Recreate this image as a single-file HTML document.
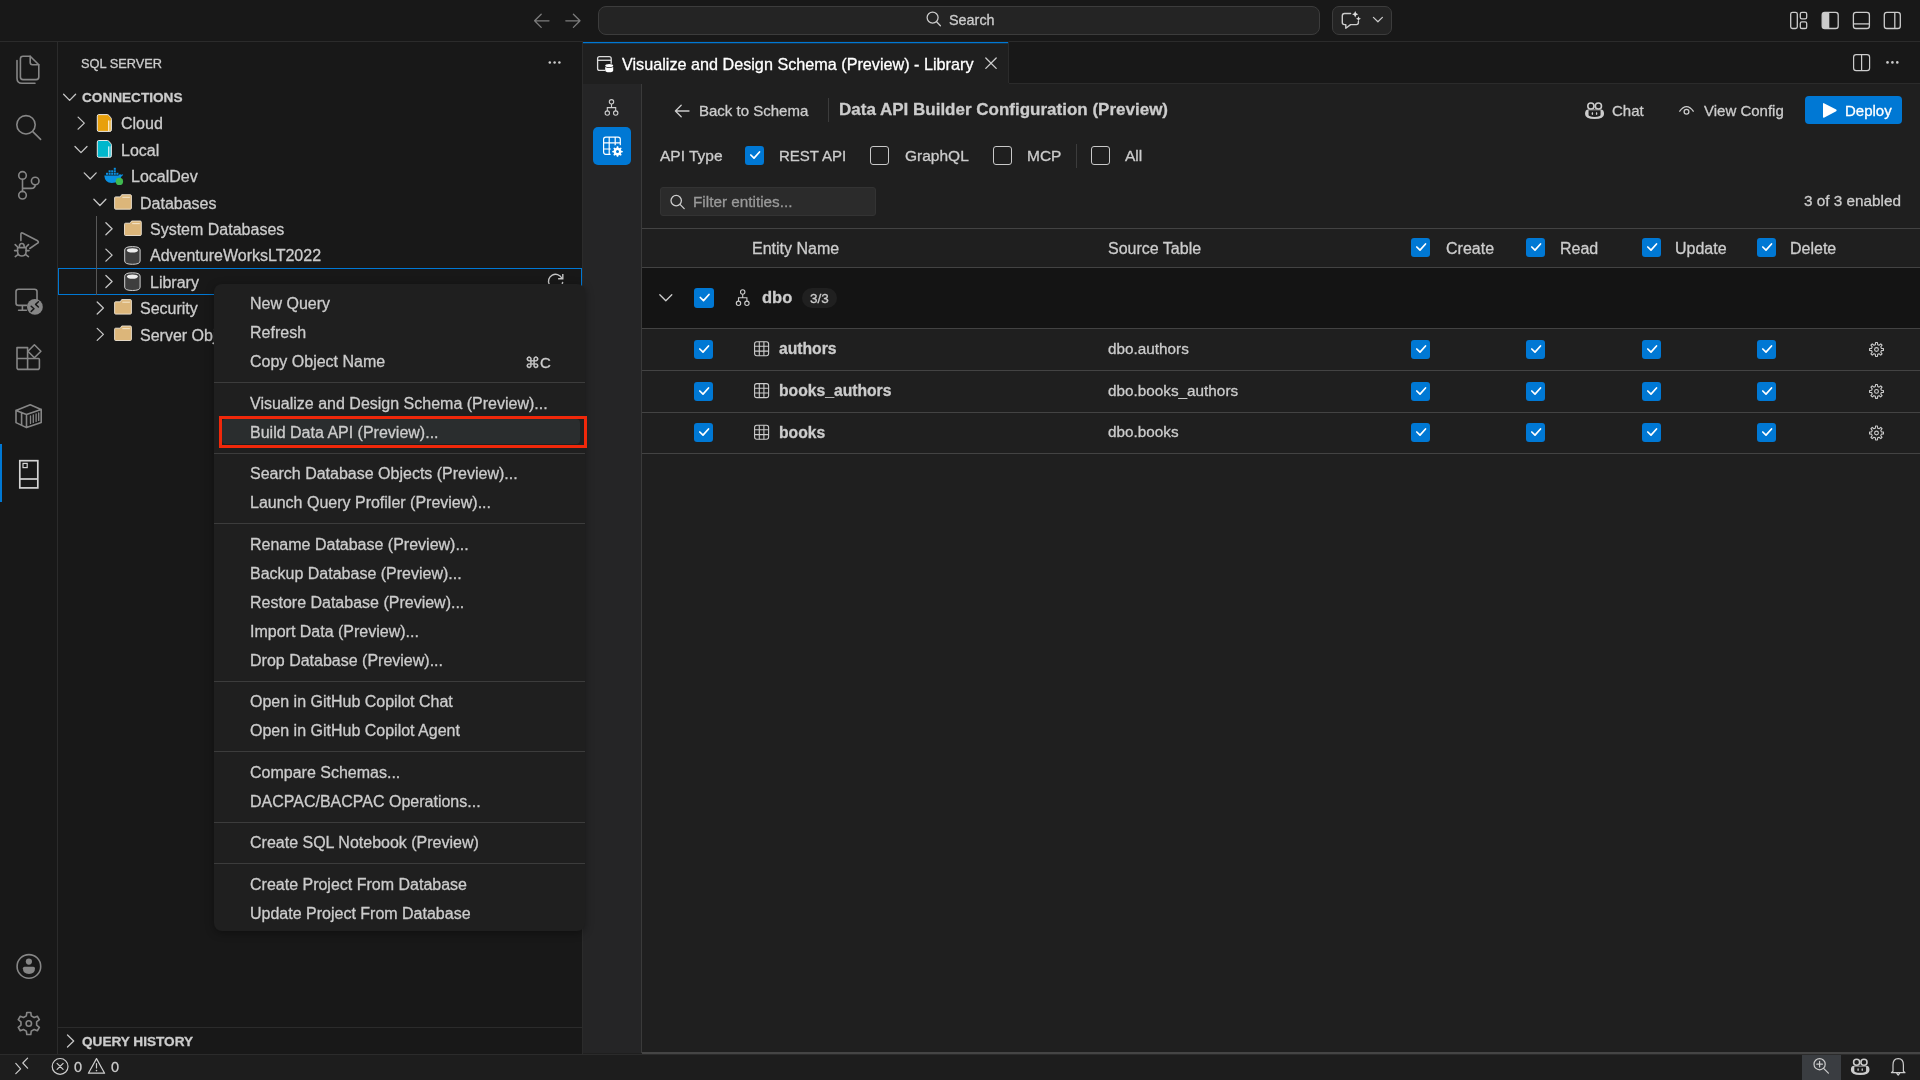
<!DOCTYPE html><html><head><meta charset="utf-8"><style>
*{box-sizing:border-box;margin:0;padding:0}
html,body{width:1920px;height:1080px;overflow:hidden;background:#181818;font-family:"Liberation Sans",sans-serif;color:#cccccc}
.a{position:absolute}
.t{position:absolute;white-space:nowrap;line-height:1;will-change:transform;-webkit-text-stroke:0.3px currentColor}
svg.ov{position:absolute;left:0;top:0;overflow:visible}
</style></head><body><div class="a" style="left:0px;top:0px;width:1920px;height:41px;background:#181818;"></div><div class="a" style="left:0px;top:41px;width:1920px;height:1px;background:#2b2b2b;"></div><div class="a" style="left:0px;top:42px;width:57px;height:1012px;background:#181818;"></div><div class="a" style="left:57px;top:42px;width:1px;height:1012px;background:#2b2b2b;"></div><div class="a" style="left:58px;top:42px;width:525px;height:1012px;background:#181818;"></div><div class="a" style="left:582px;top:42px;width:1px;height:1012px;background:#2b2b2b;"></div><div class="a" style="left:583px;top:42px;width:1337px;height:42px;background:#181818;"></div><div class="a" style="left:583px;top:83px;width:1337px;height:1px;background:#2b2b2b;"></div><div class="a" style="left:583px;top:41px;width:426px;height:43px;background:#1f1f1f;"></div><div class="a" style="left:583px;top:42px;width:426px;height:1px;background:#0078d4;"></div><div class="a" style="left:583px;top:43px;width:426px;height:1px;background:rgba(0,120,212,0.25);"></div><div class="a" style="left:1008px;top:42px;width:1px;height:41px;background:#2b2b2b;"></div><div class="a" style="left:583px;top:84px;width:1337px;height:970px;background:#1f1f1f;"></div><div class="a" style="left:583px;top:84px;width:58px;height:969px;background:#252526;"></div><div class="a" style="left:641px;top:84px;width:1px;height:969px;background:#3a3a3a;"></div><div class="a" style="left:0px;top:1054px;width:1920px;height:26px;background:#1d1d1d;"></div><div class="a" style="left:0px;top:1054px;width:1920px;height:1px;background:#2b2b2b;"></div><div class="a" style="left:642px;top:1052px;width:1278px;height:2px;background:#454545;"></div><div class="a" style="left:598px;top:6px;width:722px;height:29px;border:1px solid #3c3c3c;border-radius:8px;background:#242424"></div><div class="a" style="left:1332px;top:6px;width:60px;height:29px;border:1px solid #3c3c3c;border-radius:7px;background:#242424"></div><div class="t" style="left:948.50px;top:13.20px;font-size:14.4px;color:#cccccc;font-weight:400;">Search</div><div class="t" style="left:81.30px;top:58.16px;font-size:12.8px;color:#cccccc;font-weight:400;">SQL SERVER</div><div class="t" style="left:81.90px;top:90.93px;font-size:13.6px;color:#cccccc;font-weight:700;">CONNECTIONS</div><div class="t" style="left:121.00px;top:116.48px;font-size:16px;color:#cccccc;font-weight:400;">Cloud</div><div class="t" style="left:121.00px;top:142.88px;font-size:16px;color:#cccccc;font-weight:400;">Local</div><div class="t" style="left:130.60px;top:169.28px;font-size:16px;color:#cccccc;font-weight:400;">LocalDev</div><div class="t" style="left:140.20px;top:195.68px;font-size:16px;color:#cccccc;font-weight:400;">Databases</div><div class="t" style="left:149.80px;top:222.08px;font-size:16px;color:#cccccc;font-weight:400;">System Databases</div><div class="t" style="left:149.80px;top:248.48px;font-size:16px;color:#cccccc;font-weight:400;">AdventureWorksLT2022</div><div class="t" style="left:149.80px;top:274.88px;font-size:16px;color:#cccccc;font-weight:400;">Library</div><div class="t" style="left:140.20px;top:301.28px;font-size:16px;color:#cccccc;font-weight:400;">Security</div><div class="t" style="left:140.20px;top:327.68px;font-size:16px;color:#cccccc;font-weight:400;">Server Objects</div><div class="a" style="left:58px;top:268px;width:524px;height:27px;border:1px solid #0078d4"></div><div class="a" style="left:58px;top:1027px;width:524px;height:1px;background:#2b2b2b;"></div><div class="t" style="left:81.90px;top:1035.33px;font-size:13.6px;color:#cccccc;font-weight:700;">QUERY HISTORY</div><div class="t" style="left:74.30px;top:1059.95px;font-size:14.5px;color:#cccccc;font-weight:400;">0</div><div class="t" style="left:110.50px;top:1059.95px;font-size:14.5px;color:#cccccc;font-weight:400;">0</div><div class="a" style="left:1802px;top:1055px;width:39px;height:25px;background:#3a3d41;"></div><div class="t" style="left:622.40px;top:55.74px;font-size:16.2px;color:#ffffff;font-weight:400;">Visualize and Design Schema (Preview) - Library</div><div class="a" style="left:593px;top:127px;width:38px;height:38px;background:#0078d4;border-radius:5px"></div><div class="t" style="left:699.30px;top:102.75px;font-size:15px;color:#cccccc;font-weight:400;">Back to Schema</div><div class="a" style="left:828px;top:98px;width:1px;height:24px;background:#3c3c3c;"></div><div class="t" style="left:839.30px;top:101.01px;font-size:17px;color:#cccccc;font-weight:700;">Data API Builder Configuration (Preview)</div><div class="t" style="left:1612.00px;top:102.84px;font-size:15px;color:#cccccc;font-weight:400;">Chat</div><div class="t" style="left:1703.70px;top:102.84px;font-size:15px;color:#cccccc;font-weight:400;">View Config</div><div class="a" style="left:1805px;top:96px;width:97px;height:28px;background:#0078d4;border-radius:4px"></div><div class="t" style="left:1844.50px;top:102.84px;font-size:15px;color:#ffffff;font-weight:400;">Deploy</div><div class="t" style="left:660.20px;top:147.54px;font-size:15.5px;color:#cccccc;font-weight:400;">API Type</div><div class="t" style="left:779.30px;top:147.75px;font-size:15px;color:#cccccc;font-weight:400;">REST API</div><div class="t" style="left:904.70px;top:147.54px;font-size:15.5px;color:#cccccc;font-weight:400;">GraphQL</div><div class="t" style="left:1027.30px;top:147.54px;font-size:15.5px;color:#cccccc;font-weight:400;">MCP</div><div class="a" style="left:1076px;top:144px;width:1px;height:24px;background:#3c3c3c;"></div><div class="t" style="left:1124.80px;top:147.54px;font-size:15.5px;color:#cccccc;font-weight:400;">All</div><div class="a" style="left:660px;top:187px;width:216px;height:29px;background:#2b2b2b;border:1px solid #333;border-radius:3px"></div><div class="t" style="left:692.70px;top:194.32px;font-size:15.3px;color:#9a9a9a;font-weight:400;">Filter entities...</div><div class="t" style="right:18.60px;top:193.12px;font-size:15.3px;color:#cccccc;font-weight:400;">3 of 3 enabled</div><div class="a" style="left:642px;top:228px;width:1278px;height:1px;background:#434343;"></div><div class="a" style="left:642px;top:267px;width:1278px;height:1px;background:#434343;"></div><div class="a" style="left:642px;top:268px;width:1278px;height:60px;background:#141414;"></div><div class="a" style="left:642px;top:328px;width:1278px;height:1px;background:#434343;"></div><div class="a" style="left:642px;top:370px;width:1278px;height:1px;background:#434343;"></div><div class="a" style="left:642px;top:412px;width:1278px;height:1px;background:#434343;"></div><div class="a" style="left:642px;top:453px;width:1278px;height:1px;background:#434343;"></div><div class="t" style="left:752.40px;top:240.93px;font-size:16px;color:#cccccc;font-weight:400;">Entity Name</div><div class="t" style="left:1107.60px;top:240.93px;font-size:16px;color:#cccccc;font-weight:400;">Source Table</div><div class="t" style="left:1445.50px;top:240.53px;font-size:16px;color:#cccccc;font-weight:400;">Create</div><div class="t" style="left:1560.00px;top:240.53px;font-size:16px;color:#cccccc;font-weight:400;">Read</div><div class="t" style="left:1675.20px;top:240.53px;font-size:16px;color:#cccccc;font-weight:400;">Update</div><div class="t" style="left:1790.30px;top:240.53px;font-size:16px;color:#cccccc;font-weight:400;">Delete</div><div class="t" style="left:761.60px;top:289.12px;font-size:16.5px;color:#cccccc;font-weight:700;">dbo</div><div class="a" style="left:802px;top:288px;width:35px;height:20px;background:#202020;border-radius:10px"></div><div class="t" style="left:810.00px;top:291.77px;font-size:13.5px;color:#cccccc;font-weight:400;">3/3</div><div class="t" style="left:778.60px;top:341.05px;font-size:15.7px;color:#cccccc;font-weight:700;">authors</div><div class="t" style="left:1107.60px;top:340.92px;font-size:15.3px;color:#cccccc;font-weight:400;">dbo.authors</div><div class="t" style="left:778.60px;top:382.95px;font-size:15.7px;color:#cccccc;font-weight:700;">books_authors</div><div class="t" style="left:1107.60px;top:382.82px;font-size:15.3px;color:#cccccc;font-weight:400;">dbo.books_authors</div><div class="t" style="left:778.60px;top:424.55px;font-size:15.7px;color:#cccccc;font-weight:700;">books</div><div class="t" style="left:1107.60px;top:424.42px;font-size:15.3px;color:#cccccc;font-weight:400;">dbo.books</div><div class="a" style="left:745px;top:146px;width:19px;height:19px;background:#0078d4;border-radius:3px"></div><div class="a" style="left:870px;top:146px;width:19px;height:19px;border:1.5px solid #c8c8c8;border-radius:3px"></div><div class="a" style="left:993px;top:146px;width:19px;height:19px;border:1.5px solid #c8c8c8;border-radius:3px"></div><div class="a" style="left:1091px;top:146px;width:19px;height:19px;border:1.5px solid #c8c8c8;border-radius:3px"></div><div class="a" style="left:1411px;top:238px;width:19px;height:19px;background:#0078d4;border-radius:3px"></div><div class="a" style="left:1526px;top:238px;width:19px;height:19px;background:#0078d4;border-radius:3px"></div><div class="a" style="left:1642px;top:238px;width:19px;height:19px;background:#0078d4;border-radius:3px"></div><div class="a" style="left:1757px;top:238px;width:19px;height:19px;background:#0078d4;border-radius:3px"></div><div class="a" style="left:694px;top:288px;width:20px;height:20px;background:#0078d4;border-radius:3px"></div><div class="a" style="left:694px;top:340px;width:19px;height:19px;background:#0078d4;border-radius:3px"></div><div class="a" style="left:1411px;top:340px;width:19px;height:19px;background:#0078d4;border-radius:3px"></div><div class="a" style="left:1526px;top:340px;width:19px;height:19px;background:#0078d4;border-radius:3px"></div><div class="a" style="left:1642px;top:340px;width:19px;height:19px;background:#0078d4;border-radius:3px"></div><div class="a" style="left:1757px;top:340px;width:19px;height:19px;background:#0078d4;border-radius:3px"></div><div class="a" style="left:694px;top:382px;width:19px;height:19px;background:#0078d4;border-radius:3px"></div><div class="a" style="left:1411px;top:382px;width:19px;height:19px;background:#0078d4;border-radius:3px"></div><div class="a" style="left:1526px;top:382px;width:19px;height:19px;background:#0078d4;border-radius:3px"></div><div class="a" style="left:1642px;top:382px;width:19px;height:19px;background:#0078d4;border-radius:3px"></div><div class="a" style="left:1757px;top:382px;width:19px;height:19px;background:#0078d4;border-radius:3px"></div><div class="a" style="left:694px;top:423px;width:19px;height:19px;background:#0078d4;border-radius:3px"></div><div class="a" style="left:1411px;top:423px;width:19px;height:19px;background:#0078d4;border-radius:3px"></div><div class="a" style="left:1526px;top:423px;width:19px;height:19px;background:#0078d4;border-radius:3px"></div><div class="a" style="left:1642px;top:423px;width:19px;height:19px;background:#0078d4;border-radius:3px"></div><div class="a" style="left:1757px;top:423px;width:19px;height:19px;background:#0078d4;border-radius:3px"></div><div class="a" style="left:0px;top:444px;width:2px;height:58px;background:#0078d4;"></div><div class="a" style="left:96px;top:216px;width:1px;height:79px;background:#585858;"></div><svg class="ov" width="1920" height="1080" viewBox="0 0 1920 1080"><path d="M750.8 155 L754 158.1 L759.5 152" fill="none" stroke="#fff" stroke-width="1.7" stroke-linecap="round" stroke-linejoin="round"/><path d="M700.3 297.5 L703.5 300.6 L709.0 294.5" fill="none" stroke="#fff" stroke-width="1.7" stroke-linecap="round" stroke-linejoin="round"/><path d="M1416.8 247 L1420 250.1 L1425.5 244" fill="none" stroke="#fff" stroke-width="1.7" stroke-linecap="round" stroke-linejoin="round"/><path d="M1531.8 247 L1535 250.1 L1540.5 244" fill="none" stroke="#fff" stroke-width="1.7" stroke-linecap="round" stroke-linejoin="round"/><path d="M1647.8 247 L1651 250.1 L1656.5 244" fill="none" stroke="#fff" stroke-width="1.7" stroke-linecap="round" stroke-linejoin="round"/><path d="M1762.8 247 L1766 250.1 L1771.5 244" fill="none" stroke="#fff" stroke-width="1.7" stroke-linecap="round" stroke-linejoin="round"/><path d="M699.8 349 L703 352.1 L708.5 346" fill="none" stroke="#fff" stroke-width="1.7" stroke-linecap="round" stroke-linejoin="round"/><path d="M1416.8 349 L1420 352.1 L1425.5 346" fill="none" stroke="#fff" stroke-width="1.7" stroke-linecap="round" stroke-linejoin="round"/><path d="M1531.8 349 L1535 352.1 L1540.5 346" fill="none" stroke="#fff" stroke-width="1.7" stroke-linecap="round" stroke-linejoin="round"/><path d="M1647.8 349 L1651 352.1 L1656.5 346" fill="none" stroke="#fff" stroke-width="1.7" stroke-linecap="round" stroke-linejoin="round"/><path d="M1762.8 349 L1766 352.1 L1771.5 346" fill="none" stroke="#fff" stroke-width="1.7" stroke-linecap="round" stroke-linejoin="round"/><path d="M699.8 391 L703 394.1 L708.5 388" fill="none" stroke="#fff" stroke-width="1.7" stroke-linecap="round" stroke-linejoin="round"/><path d="M1416.8 391 L1420 394.1 L1425.5 388" fill="none" stroke="#fff" stroke-width="1.7" stroke-linecap="round" stroke-linejoin="round"/><path d="M1531.8 391 L1535 394.1 L1540.5 388" fill="none" stroke="#fff" stroke-width="1.7" stroke-linecap="round" stroke-linejoin="round"/><path d="M1647.8 391 L1651 394.1 L1656.5 388" fill="none" stroke="#fff" stroke-width="1.7" stroke-linecap="round" stroke-linejoin="round"/><path d="M1762.8 391 L1766 394.1 L1771.5 388" fill="none" stroke="#fff" stroke-width="1.7" stroke-linecap="round" stroke-linejoin="round"/><path d="M699.8 432 L703 435.1 L708.5 429" fill="none" stroke="#fff" stroke-width="1.7" stroke-linecap="round" stroke-linejoin="round"/><path d="M1416.8 432 L1420 435.1 L1425.5 429" fill="none" stroke="#fff" stroke-width="1.7" stroke-linecap="round" stroke-linejoin="round"/><path d="M1531.8 432 L1535 435.1 L1540.5 429" fill="none" stroke="#fff" stroke-width="1.7" stroke-linecap="round" stroke-linejoin="round"/><path d="M1647.8 432 L1651 435.1 L1656.5 429" fill="none" stroke="#fff" stroke-width="1.7" stroke-linecap="round" stroke-linejoin="round"/><path d="M1762.8 432 L1766 435.1 L1771.5 429" fill="none" stroke="#fff" stroke-width="1.7" stroke-linecap="round" stroke-linejoin="round"/><g fill="none" stroke="#7c7c7c" stroke-width="1.3" stroke-linecap="round" stroke-linejoin="round"><path d="M534.6 20.8 H549 M541.2 14.2 L534.6 20.8 L541.2 27.4"/><path d="M580 20.8 H565.8 M573.4 14.2 L580 20.8 L573.4 27.4"/></g><g fill="none" stroke="#cccccc" stroke-width="1.25" stroke-linecap="round"><circle cx="932.6" cy="17.6" r="5.5"/><path d="M936.6 21.8 L940.4 25.8"/></g><g fill="none" stroke="#cccccc" stroke-width="1.4" stroke-linejoin="round" stroke-linecap="round"><path d="M1350.6 13.5 H1344.5 Q1342.3 13.5 1342.3 15.7 V22.6 Q1342.3 24.6 1344.4 24.6 H1345.8 V28.3 L1350.6 24.6 H1356.4 Q1358.4 24.6 1358.4 22.6 V21.4"/><path d="M1373.4 17.4 L1377.9 21.8 L1382.4 17.4" stroke-width="1.2"/></g><path fill="#dddddd" d="M1355.2 11 L1356.2 13.3 L1358.3 14.3 L1356.2 15.3 L1355.2 17.6 L1354.2 15.3 L1352.1 14.3 L1354.2 13.3 Z M1358.5 16.2 L1359.3 17.9 L1361 18.7 L1359.3 19.5 L1358.5 21.2 L1357.7 19.5 L1356 18.7 L1357.7 17.9 Z"/><g fill="none" stroke="#cccccc" stroke-width="1.3"><rect x="1790.7" y="12.3" width="6.6" height="16.2" rx="1.8"/><rect x="1800.3" y="12.3" width="6.4" height="6.6" rx="1.6"/><rect x="1800.3" y="21.9" width="6.4" height="6.6" rx="1.6"/><rect x="1822.2" y="12.3" width="16" height="16.2" rx="2.6"/><rect x="1853.4" y="12.3" width="16" height="16.2" rx="2.6"/><path d="M1853.4 23.9 H1869.4"/><rect x="1884.3" y="12.3" width="16" height="16.2" rx="2.6"/><path d="M1894.8 12.3 V28.5"/></g><path fill="#cccccc" d="M1824.8 12.3 H1829.3 V28.5 H1824.8 Q1822.2 28.5 1822.2 25.9 V14.9 Q1822.2 12.3 1824.8 12.3 Z"/><g fill="none" stroke="#868686" stroke-width="1.6" stroke-linejoin="round" stroke-linecap="round"><path d="M23 56.2 H30.2 L38.8 64.8 V77 Q38.8 79.6 36.2 79.6 H23 Q20.4 79.6 20.4 77 V58.8 Q20.4 56.2 23 56.2 Z"/><path d="M30.2 56.2 V62.6 Q30.2 64.8 32.4 64.8 H38.8"/><path d="M17 60.6 V78.2 Q17 83.2 22 83.2 H35"/><circle cx="26" cy="124.8" r="9.2"/><path d="M32.8 131.6 L40.6 139.4"/><circle cx="22.5" cy="175.4" r="3.8"/><circle cx="22.5" cy="195.2" r="3.8"/><circle cx="35.2" cy="181" r="3.8"/><path d="M22.5 179.2 V191.4 M35.2 184.8 Q35.2 188.4 31.2 188.4 H22.5"/><path d="M20.9 240.6 V234.4 Q20.9 232.2 23 233.2 L37.6 240.8 Q39.2 242.2 37.6 243.2 L29.8 248.5"/><path d="M19.4 246.4 Q19.4 243.5 21.8 243.5 Q24.2 243.5 24.2 246.4"/><path d="M17.6 247.6 H26.1 V251.4 Q26.1 256 21.85 256 Q17.6 256 17.6 251.4 Z"/><path d="M17.4 246.8 L15.2 244.6 M26.3 246.8 L28.5 244.6 M17.6 250.6 H14.6 M26.1 250.6 H29 M18.2 254.4 L15.3 256.6 M25.5 254.4 L28.4 256.6"/><path d="M37 300 V291.6 Q37 289.2 34.6 289.2 H18.4 Q16 289.2 16 291.6 V303 Q16 305.4 18.4 305.4 H26.6 M22.4 305.4 V310.2 M18.6 310.2 H26.4"/><path d="M17 347.6 H27.6 V369.4 H19 Q17 369.4 17 367.4 Z M17 358.5 H38.4 Q39.4 358.5 39.4 359.6 V367.4 Q39.4 369.4 37.4 369.4 H27.6"/><path d="M34.4 344.8 L40.9 351.3 L34.4 357.8 L27.9 351.3 Z"/><path d="M16 410.4 L30.2 404.8 L41.2 409.4 L26.5 414.6 Z M16 410.4 V422.6 L26.5 427.6 L41.2 422.6 V409.4 M26.5 414.6 V427.6 M21.6 412.6 V425"/></g><g fill="none" stroke="#868686" stroke-width="1.3" stroke-linecap="round"><path d="M30.5 416 V423.4 M33.3 415 V422.4 M36.1 414 V421.4 M38.7 413 V420.4"/></g><circle cx="34.9" cy="306.9" r="7.9" fill="#868686"/><g fill="none" stroke="#181818" stroke-width="1.5" stroke-linecap="round" stroke-linejoin="round"><path d="M31.2 306.2 L34 308.8 L31.2 311.4 M38.4 301.8 L35.6 304.4 L38.4 307"/></g><g fill="none" stroke="#d4d4d4" stroke-width="1.7"><rect x="19.8" y="460.7" width="18" height="27.2"/><path d="M19.8 479 H37.8"/><rect x="23" y="463.4" width="4.2" height="4.2" stroke-width="1.2"/></g><g fill="none" stroke="#868686" stroke-width="1.6"><circle cx="28.9" cy="966.4" r="11.8"/></g><g fill="#868686"><circle cx="28.9" cy="961.6" r="3.1"/><path d="M22.9 968.3 Q22.9 966.7 24.5 966.7 H33.4 Q35 966.7 35 968.3 Q35 973.9 28.95 973.9 Q22.9 973.9 22.9 968.3 Z"/></g><path d="M26.33 1015.89 L26.82 1012.48 L30.78 1012.48 L31.27 1015.89 L34.15 1017.55 L37.35 1016.27 L39.34 1019.71 L36.63 1021.84 L36.63 1025.16 L39.34 1027.29 L37.35 1030.73 L34.15 1029.45 L31.27 1031.11 L30.78 1034.52 L26.82 1034.52 L26.33 1031.11 L23.45 1029.45 L20.25 1030.73 L18.26 1027.29 L20.97 1025.16 L20.97 1021.84 L18.26 1019.71 L20.25 1016.27 L23.45 1017.55 Z" fill="none" stroke="#868686" stroke-width="1.6" stroke-linejoin="round"/><circle cx="28.8" cy="1023.5" r="2.7" fill="none" stroke="#868686" stroke-width="1.6"/><g fill="#cccccc"><circle cx="549.8" cy="62.4" r="1.25"/><circle cx="554.6" cy="62.4" r="1.25"/><circle cx="559.4" cy="62.4" r="1.25"/></g><path d="M63.599999999999994 94.2 L69.6 100.39999999999999 L75.6 94.2" fill="none" stroke="#c5c5c5" stroke-width="1.3" stroke-linecap="round" stroke-linejoin="round"/><path d="M78.10000000000001 117.15 L84.3 123.15 L78.10000000000001 129.15" fill="none" stroke="#c5c5c5" stroke-width="1.3" stroke-linecap="round" stroke-linejoin="round"/><path d="M75 146.45000000000002 L81 152.65 L87 146.45000000000002" fill="none" stroke="#c5c5c5" stroke-width="1.3" stroke-linecap="round" stroke-linejoin="round"/><path d="M84.2 172.85 L90.2 179.04999999999998 L96.2 172.85" fill="none" stroke="#c5c5c5" stroke-width="1.3" stroke-linecap="round" stroke-linejoin="round"/><path d="M93.9 199.25 L99.9 205.45 L105.9 199.25" fill="none" stroke="#c5c5c5" stroke-width="1.3" stroke-linecap="round" stroke-linejoin="round"/><path d="M105.9 222.75 L112.1 228.75 L105.9 234.75" fill="none" stroke="#c5c5c5" stroke-width="1.3" stroke-linecap="round" stroke-linejoin="round"/><path d="M105.9 249.15 L112.1 255.15 L105.9 261.15" fill="none" stroke="#c5c5c5" stroke-width="1.3" stroke-linecap="round" stroke-linejoin="round"/><path d="M105.9 275.54999999999995 L112.1 281.54999999999995 L105.9 287.54999999999995" fill="none" stroke="#c5c5c5" stroke-width="1.3" stroke-linecap="round" stroke-linejoin="round"/><path d="M97.2 301.95 L103.39999999999999 307.95 L97.2 313.95" fill="none" stroke="#c5c5c5" stroke-width="1.3" stroke-linecap="round" stroke-linejoin="round"/><path d="M97.2 328.35 L103.39999999999999 334.35 L97.2 340.35" fill="none" stroke="#c5c5c5" stroke-width="1.3" stroke-linecap="round" stroke-linejoin="round"/><path d="M98.6 114.6 H107.39999999999999 Q108.2 114.6 108.8 115.3 L110.8 117.69999999999999 Q111.39999999999999 118.39999999999999 111.39999999999999 119.3 V129.9 Q111.39999999999999 131.4 109.89999999999999 131.4 H98.6 Q97.3 131.4 97.3 129.9 V116.1 Q97.3 114.6 98.6 114.6 Z" fill="#e8a00c" stroke="#e8e8e8" stroke-width="1"/><rect x="108.5" y="120.5" width="2.4" height="10.4" fill="#ffffff" fill-opacity="0.35"/><path d="M108.5 120.5 V130.9" stroke="#ffffff" stroke-opacity="0.8" stroke-width="0.9"/><path d="M98.6 140.5 H107.39999999999999 Q108.2 140.5 108.8 141.2 L110.8 143.6 Q111.39999999999999 144.3 111.39999999999999 145.2 V155.8 Q111.39999999999999 157.3 109.89999999999999 157.3 H98.6 Q97.3 157.3 97.3 155.8 V142.0 Q97.3 140.5 98.6 140.5 Z" fill="#00b7cc" stroke="#e8e8e8" stroke-width="1"/><rect x="108.5" y="146.4" width="2.4" height="10.4" fill="#ffffff" fill-opacity="0.35"/><path d="M108.5 146.4 V156.8" stroke="#ffffff" stroke-opacity="0.8" stroke-width="0.9"/><path d="M115.6 196.9 H120.3 L121.69999999999999 194.7 H130.29999999999998 Q131.4 194.7 131.4 195.9 V208.1 Q131.4 209.2 130.29999999999998 209.2 H115.6 Q114.6 209.2 114.6 208.1 V197.9 Q114.6 196.9 115.6 196.9 Z" fill="#dcb67a" stroke="#f0e6d6" stroke-width="0.9"/><path d="M122.3 197.29999999999998 H129.9" stroke="#f3e3c6" stroke-width="1.1"/><path d="M125.5 223.20000000000002 H130.2 L131.6 221.0 H140.2 Q141.3 221.0 141.3 222.20000000000002 V234.4 Q141.3 235.5 140.2 235.5 H125.5 Q124.5 235.5 124.5 234.4 V224.20000000000002 Q124.5 223.20000000000002 125.5 223.20000000000002 Z" fill="#dcb67a" stroke="#f0e6d6" stroke-width="0.9"/><path d="M132.2 223.6 H139.8" stroke="#f3e3c6" stroke-width="1.1"/><path d="M115.6 301.8 H120.3 L121.69999999999999 299.6 H130.29999999999998 Q131.4 299.6 131.4 300.8 V313 Q131.4 314.1 130.29999999999998 314.1 H115.6 Q114.6 314.1 114.6 313 V302.8 Q114.6 301.8 115.6 301.8 Z" fill="#dcb67a" stroke="#f0e6d6" stroke-width="0.9"/><path d="M122.3 302.2 H129.9" stroke="#f3e3c6" stroke-width="1.1"/><path d="M115.6 328.2 H120.3 L121.69999999999999 326.0 H130.29999999999998 Q131.4 326.0 131.4 327.2 V339.4 Q131.4 340.5 130.29999999999998 340.5 H115.6 Q114.6 340.5 114.6 339.4 V329.2 Q114.6 328.2 115.6 328.2 Z" fill="#dcb67a" stroke="#f0e6d6" stroke-width="0.9"/><path d="M122.3 328.59999999999997 H129.9" stroke="#f3e3c6" stroke-width="1.1"/><path d="M124.69999999999999 250 Q124.69999999999999 246.6 132.4 246.6 Q140.1 246.6 140.1 250 V261 Q140.1 264.3 132.4 264.3 Q124.69999999999999 264.3 124.69999999999999 261 Z" fill="#3e3e3e" stroke="#cfcfcf" stroke-width="1"/><ellipse cx="132.4" cy="250.4" rx="5.6" ry="2.2" fill="#ececec"/><path d="M124.69999999999999 276.2 Q124.69999999999999 272.8 132.4 272.8 Q140.1 272.8 140.1 276.2 V287.2 Q140.1 290.5 132.4 290.5 Q124.69999999999999 290.5 124.69999999999999 287.2 Z" fill="#3e3e3e" stroke="#cfcfcf" stroke-width="1"/><ellipse cx="132.4" cy="276.59999999999997" rx="5.6" ry="2.2" fill="#ececec"/><g fill="#0a90e2"><path d="M104.3 175.6 H118.5 Q119.8 173.6 121.2 174.8 Q122.4 174.8 123.2 174 Q123 175.8 121.4 176.4 Q119.6 182.6 111.8 183 Q104.8 183 104.3 175.6 Z"/><rect x="106" y="172.8" width="2" height="2"/><rect x="108.6" y="172.8" width="2" height="2"/><rect x="111.2" y="172.8" width="2" height="2"/><rect x="113.8" y="172.8" width="2" height="2"/><rect x="116.4" y="172.8" width="2" height="2"/><rect x="108.6" y="170.3" width="2" height="2"/><rect x="111.2" y="170.3" width="2" height="2"/><rect x="113.8" y="170.3" width="2" height="2"/><rect x="113.8" y="167.8" width="2" height="2"/></g><circle cx="119.4" cy="181.4" r="3.7" fill="#3fb950"/><path d="M549.3 284.6 A6.7 6.7 0 0 1 561.8 278" fill="none" stroke="#c5c5c5" stroke-width="1.4"/><path d="M562.8 273.9 V278.8 H558.1" fill="none" stroke="#c5c5c5" stroke-width="1.4"/><path d="M562.7 281.8 L562.2 284.4" fill="none" stroke="#c5c5c5" stroke-width="1.4"/><path d="M67.5 1035 L73.69999999999999 1041 L67.5 1047" fill="none" stroke="#c5c5c5" stroke-width="1.3" stroke-linecap="round" stroke-linejoin="round"/><g fill="none" stroke="#cccccc" stroke-width="1.2" stroke-linecap="round" stroke-linejoin="round"><path d="M15.8 1063.4 L20.6 1068.8 L15.8 1073.6 M27.6 1058.2 L22.8 1063 L27.6 1068.2"/><circle cx="60.1" cy="1066.4" r="7.9"/><path d="M57.1 1063.4 L63.1 1069.4 M63.1 1063.4 L57.1 1069.4"/><path d="M96.5 1058.6 L104.6 1073.2 H88.4 Z M96.5 1063.6 V1068"/><circle cx="1819.6" cy="1064.2" r="5.6"/><path d="M1823.6 1068.4 L1828.4 1073.2 M1816.8 1064.2 H1822.4 M1819.6 1061.4 V1067"/><path d="M1893 1071.2 V1065 Q1893 1058.6 1898.2 1058.6 Q1903.4 1058.6 1903.4 1065 V1071.2 L1905 1072.6 H1891.4 Z M1896.8 1073.4 L1898.2 1075 L1899.6 1073.4"/></g><circle cx="96.5" cy="1070.6" r="0.8" fill="#cccccc"/><g transform="translate(1860.2,1066.6) scale(0.98)"><path fill="#cccccc" fill-rule="evenodd" d="M-9.5 3.4 Q-9.5 -0.9 -6.2 -0.9 H6.2 Q9.5 -0.9 9.5 3.4 Q9.5 8.5 0 8.5 Q-9.5 8.5 -9.5 3.4 Z M-6 -0.2 H6 V4.6 Q6 6.4 0 6.4 Q-6 6.4 -6 4.6 Z"/><ellipse cx="-3.65" cy="-4.5" rx="3.1" ry="3.05" fill="#1d1d1d" stroke="#cccccc" stroke-width="1.6"/><ellipse cx="3.85" cy="-4.5" rx="3.1" ry="3.05" fill="#1d1d1d" stroke="#cccccc" stroke-width="1.6"/><ellipse cx="-2.15" cy="3.1" rx="0.7" ry="1.5" fill="#cccccc"/><ellipse cx="2.05" cy="3.1" rx="0.7" ry="1.5" fill="#cccccc"/></g><g fill="none" stroke="#dddddd" stroke-width="1.3"><path d="M605 70.4 H599.6 Q597.6 70.4 597.6 68.4 V58.6 Q597.6 56.6 599.6 56.6 H609.2 Q611.2 56.6 611.2 58.6 V63.8"/><path d="M597.6 60.3 H611.2"/></g><g fill="#ffffff"><ellipse cx="609.2" cy="65.6" rx="4" ry="1.6"/><path d="M605.2 67 Q609.2 68.8 613.2 67 V70.4 Q613.2 72.2 609.2 72.2 Q605.2 72.2 605.2 70.4 Z"/></g><path d="M985.8 58 L996.2 68.4 M996.2 58 L985.8 68.4" stroke="#cccccc" stroke-width="1.3" stroke-linecap="round"/><g fill="none" stroke="#cccccc" stroke-width="1.2"><rect x="1853.6" y="54.6" width="16" height="16" rx="2.6"/><path d="M1861.6 54.6 V70.6"/></g><g fill="#cccccc"><circle cx="1887.5" cy="62.4" r="1.3"/><circle cx="1892.4" cy="62.4" r="1.3"/><circle cx="1897.3" cy="62.4" r="1.3"/></g><g fill="none" stroke="#cccccc" stroke-width="1.1"><circle cx="611.5" cy="101.8" r="2.2"/><circle cx="607.3" cy="113.10000000000001" r="2.2"/><circle cx="615.7" cy="113.10000000000001" r="2.2"/><path d="M611.5 104.0 V107.60000000000001 M607.3 110.9 V107.60000000000001 H615.7 V110.9"/></g><g fill="none" stroke="#cccccc" stroke-width="1.1"><circle cx="742.7" cy="292.0" r="2.2"/><circle cx="738.5" cy="303.29999999999995" r="2.2"/><circle cx="746.9000000000001" cy="303.29999999999995" r="2.2"/><path d="M742.7 294.2 V297.79999999999995 M738.5 301.09999999999997 V297.79999999999995 H746.9000000000001 V301.09999999999997"/></g><g fill="none" stroke="#ffffff" stroke-width="1.2"><path d="M610.6 154.3 H605.8 Q603.6 154.3 603.6 152.1 V139.3 Q603.6 137.1 605.8 137.1 H618.1 Q620.3 137.1 620.3 139.3 V145.2"/><path d="M603.6 142.8 H620.3 M603.6 149 H610.8 M609.2 137.1 V154.3 M615.2 137.1 V145.4"/></g><circle cx="617.5" cy="151.6" r="6.6" fill="#0078d4"/><path d="M616.53 147.82 L616.84 146.34 L618.16 146.34 L618.47 147.82 L619.49 148.24 L620.75 147.41 L621.69 148.35 L620.86 149.61 L621.28 150.63 L622.76 150.94 L622.76 152.26 L621.28 152.57 L620.86 153.59 L621.69 154.85 L620.75 155.79 L619.49 154.96 L618.47 155.38 L618.16 156.86 L616.84 156.86 L616.53 155.38 L615.51 154.96 L614.25 155.79 L613.31 154.85 L614.14 153.59 L613.72 152.57 L612.24 152.26 L612.24 150.94 L613.72 150.63 L614.14 149.61 L613.31 148.35 L614.25 147.41 L615.51 148.24 Z" fill="#ffffff"/><circle cx="617.5" cy="151.6" r="1.5" fill="#0078d4"/><path d="M675.4 111 H689 M681.2 105.2 L675.4 111 L681.2 116.8" fill="none" stroke="#cccccc" stroke-width="1.3" stroke-linecap="round" stroke-linejoin="round"/><g transform="translate(1594.55,110.5) scale(1.0)"><path fill="#cccccc" fill-rule="evenodd" d="M-9.5 3.4 Q-9.5 -0.9 -6.2 -0.9 H6.2 Q9.5 -0.9 9.5 3.4 Q9.5 8.5 0 8.5 Q-9.5 8.5 -9.5 3.4 Z M-6 -0.2 H6 V4.6 Q6 6.4 0 6.4 Q-6 6.4 -6 4.6 Z"/><ellipse cx="-3.65" cy="-4.5" rx="3.1" ry="3.05" fill="#1f1f1f" stroke="#cccccc" stroke-width="1.6"/><ellipse cx="3.85" cy="-4.5" rx="3.1" ry="3.05" fill="#1f1f1f" stroke="#cccccc" stroke-width="1.6"/><ellipse cx="-2.15" cy="3.1" rx="0.7" ry="1.5" fill="#cccccc"/><ellipse cx="2.05" cy="3.1" rx="0.7" ry="1.5" fill="#cccccc"/></g><g fill="none" stroke="#cccccc" stroke-width="1.3"><path d="M1679.4 111.6 Q1686.5 101.8 1693.6 111.6"/><circle cx="1686.5" cy="111.8" r="2.4"/></g><path d="M1823 104 Q1823 102.6 1824.4 103.4 L1836.2 109.6 Q1837.2 110.4 1836.2 111.2 L1824.4 117.4 Q1823 118.2 1823 116.8 Z" fill="#ffffff"/><g fill="none" stroke="#cccccc" stroke-width="1.3" stroke-linecap="round"><circle cx="676.2" cy="200.6" r="5.2"/><path d="M680 204.4 L684.2 208.6"/></g><path d="M659.8 294.8 L665.8 300.8 L671.8 294.8" fill="none" stroke="#cccccc" stroke-width="1.3" stroke-linecap="round" stroke-linejoin="round"/><g fill="none" stroke="#cccccc" stroke-width="1.1"><rect x="754.6" y="341.7" width="14" height="14" rx="2.2"/><path d="M754.6 346.3 H768.6 M754.6 351.09999999999997 H768.6 M759.3 341.7 V355.7 M763.9 341.7 V355.7"/></g><path d="M1875.33 344.64 L1875.57 342.56 L1877.43 342.56 L1877.67 344.64 L1879.11 345.24 L1880.75 343.94 L1882.06 345.25 L1880.76 346.89 L1881.36 348.33 L1883.44 348.57 L1883.44 350.43 L1881.36 350.67 L1880.76 352.11 L1882.06 353.75 L1880.75 355.06 L1879.11 353.76 L1877.67 354.36 L1877.43 356.44 L1875.57 356.44 L1875.33 354.36 L1873.89 353.76 L1872.25 355.06 L1870.94 353.75 L1872.24 352.11 L1871.64 350.67 L1869.56 350.43 L1869.56 348.57 L1871.64 348.33 L1872.24 346.89 L1870.94 345.25 L1872.25 343.94 L1873.89 345.24 Z" fill="none" stroke="#cccccc" stroke-width="1.1" stroke-linejoin="round"/><circle cx="1876.5" cy="349.5" r="1.9" fill="none" stroke="#cccccc" stroke-width="1.1"/><g fill="none" stroke="#cccccc" stroke-width="1.1"><rect x="754.6" y="383.59999999999997" width="14" height="14" rx="2.2"/><path d="M754.6 388.2 H768.6 M754.6 392.99999999999994 H768.6 M759.3 383.59999999999997 V397.59999999999997 M763.9 383.59999999999997 V397.59999999999997"/></g><path d="M1875.33 386.54 L1875.57 384.46 L1877.43 384.46 L1877.67 386.54 L1879.11 387.14 L1880.75 385.84 L1882.06 387.15 L1880.76 388.79 L1881.36 390.23 L1883.44 390.47 L1883.44 392.33 L1881.36 392.57 L1880.76 394.01 L1882.06 395.65 L1880.75 396.96 L1879.11 395.66 L1877.67 396.26 L1877.43 398.34 L1875.57 398.34 L1875.33 396.26 L1873.89 395.66 L1872.25 396.96 L1870.94 395.65 L1872.24 394.01 L1871.64 392.57 L1869.56 392.33 L1869.56 390.47 L1871.64 390.23 L1872.24 388.79 L1870.94 387.15 L1872.25 385.84 L1873.89 387.14 Z" fill="none" stroke="#cccccc" stroke-width="1.1" stroke-linejoin="round"/><circle cx="1876.5" cy="391.4" r="1.9" fill="none" stroke="#cccccc" stroke-width="1.1"/><g fill="none" stroke="#cccccc" stroke-width="1.1"><rect x="754.6" y="425.2" width="14" height="14" rx="2.2"/><path d="M754.6 429.8 H768.6 M754.6 434.59999999999997 H768.6 M759.3 425.2 V439.2 M763.9 425.2 V439.2"/></g><path d="M1875.33 428.14 L1875.57 426.06 L1877.43 426.06 L1877.67 428.14 L1879.11 428.74 L1880.75 427.44 L1882.06 428.75 L1880.76 430.39 L1881.36 431.83 L1883.44 432.07 L1883.44 433.93 L1881.36 434.17 L1880.76 435.61 L1882.06 437.25 L1880.75 438.56 L1879.11 437.26 L1877.67 437.86 L1877.43 439.94 L1875.57 439.94 L1875.33 437.86 L1873.89 437.26 L1872.25 438.56 L1870.94 437.25 L1872.24 435.61 L1871.64 434.17 L1869.56 433.93 L1869.56 432.07 L1871.64 431.83 L1872.24 430.39 L1870.94 428.75 L1872.25 427.44 L1873.89 428.74 Z" fill="none" stroke="#cccccc" stroke-width="1.1" stroke-linejoin="round"/><circle cx="1876.5" cy="433" r="1.9" fill="none" stroke="#cccccc" stroke-width="1.1"/></svg><div class="a" style="left:214px;top:284px;width:371px;height:647px;background:#1f1f1f;border-radius:8px;box-shadow:0 2px 8px rgba(0,0,0,0.36)"></div><div class="t" style="left:249.6px;top:296.03px;font-size:16px;color:#cccccc">New Query</div><div class="t" style="left:249.6px;top:325.03px;font-size:16px;color:#cccccc">Refresh</div><div class="t" style="left:249.6px;top:354.03px;font-size:16px;color:#cccccc">Copy Object Name</div><div class="t" style="left:524.5px;top:354.53px;font-size:15px;color:#cccccc">&#8984;C</div><div class="a" style="left:214px;top:382.10px;width:371px;height:1px;background:#3c3c3c"></div><div class="t" style="left:249.6px;top:395.53px;font-size:16px;color:#cccccc">Visualize and Design Schema (Preview)...</div><div class="a" style="left:222px;top:419.10px;width:358px;height:25px;background:#2a2d2e;border-radius:4px"></div><div class="t" style="left:249.6px;top:424.53px;font-size:16px;color:#cccccc">Build Data API (Preview)...</div><div class="a" style="left:214px;top:452.60px;width:371px;height:1px;background:#3c3c3c"></div><div class="t" style="left:249.6px;top:466.03px;font-size:16px;color:#cccccc">Search Database Objects (Preview)...</div><div class="t" style="left:249.6px;top:495.03px;font-size:16px;color:#cccccc">Launch Query Profiler (Preview)...</div><div class="a" style="left:214px;top:523.10px;width:371px;height:1px;background:#3c3c3c"></div><div class="t" style="left:249.6px;top:536.53px;font-size:16px;color:#cccccc">Rename Database (Preview)...</div><div class="t" style="left:249.6px;top:565.53px;font-size:16px;color:#cccccc">Backup Database (Preview)...</div><div class="t" style="left:249.6px;top:594.53px;font-size:16px;color:#cccccc">Restore Database (Preview)...</div><div class="t" style="left:249.6px;top:623.53px;font-size:16px;color:#cccccc">Import Data (Preview)...</div><div class="t" style="left:249.6px;top:652.53px;font-size:16px;color:#cccccc">Drop Database (Preview)...</div><div class="a" style="left:214px;top:680.60px;width:371px;height:1px;background:#3c3c3c"></div><div class="t" style="left:249.6px;top:694.03px;font-size:16px;color:#cccccc">Open in GitHub Copilot Chat</div><div class="t" style="left:249.6px;top:723.03px;font-size:16px;color:#cccccc">Open in GitHub Copilot Agent</div><div class="a" style="left:214px;top:751.10px;width:371px;height:1px;background:#3c3c3c"></div><div class="t" style="left:249.6px;top:764.53px;font-size:16px;color:#cccccc">Compare Schemas...</div><div class="t" style="left:249.6px;top:793.53px;font-size:16px;color:#cccccc">DACPAC/BACPAC Operations...</div><div class="a" style="left:214px;top:821.60px;width:371px;height:1px;background:#3c3c3c"></div><div class="t" style="left:249.6px;top:835.03px;font-size:16px;color:#cccccc">Create SQL Notebook (Preview)</div><div class="a" style="left:214px;top:863.10px;width:371px;height:1px;background:#3c3c3c"></div><div class="t" style="left:249.6px;top:876.53px;font-size:16px;color:#cccccc">Create Project From Database</div><div class="t" style="left:249.6px;top:905.53px;font-size:16px;color:#cccccc">Update Project From Database</div><div class="a" style="left:219px;top:416px;width:368px;height:32px;border:3px solid #f0280a"></div></body></html>
